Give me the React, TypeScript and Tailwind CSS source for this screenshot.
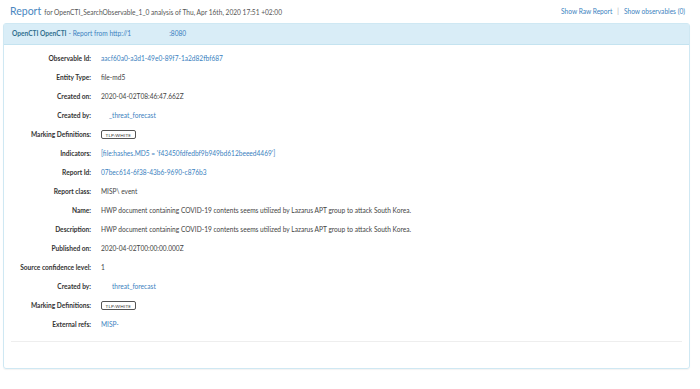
import React from "react";

type Row = {
  label: string;
  value: React.ReactNode;
};

const link = "text-[#3b7fc0]";

const Tlp = () => (
  <span className="inline-flex h-[9px] items-center rounded-[2px] border border-[#555] px-[3.5px] text-[4.6px] leading-none tracking-[0.2px] text-[#333]">
    TLP:WHITE
  </span>
);

const rows: Row[] = [
  { label: "Observable Id:", value: <span className={link}>aacf60a0-a3d1-49e0-89f7-1a2d82fbf687</span> },
  { label: "Entity Type:", value: "file-md5" },
  { label: "Created on:", value: "2020-04-02T08:46:47.662Z" },
  { label: "Created by:", value: <span className={`${link} pl-[8px]`}>_threat_forecast</span> },
  { label: "Marking Definitions:", value: <Tlp /> },
  {
    label: "Indicators:",
    value: <span className={link}>[file:hashes.MD5 = 'f43450fdfedbf9b949bd612beeed4469']</span>,
  },
  { label: "Report Id:", value: <span className={link}>07bec614-6f38-43b6-9690-c876b3</span> },
  { label: "Report class:", value: "MISP\\ event" },
  {
    label: "Name:",
    value: "HWP document containing COVID-19 contents seems utilized by Lazarus APT group to attack South Korea.",
  },
  {
    label: "Description:",
    value: "HWP document containing COVID-19 contents seems utilized by Lazarus APT group to attack South Korea.",
  },
  { label: "Published on:", value: "2020-04-02T00:00:00.000Z" },
  { label: "Source confidence level:", value: "1" },
  { label: "Created by:", value: <span className={`${link} pl-[11px]`}>threat_forecast</span> },
  { label: "Marking Definitions:", value: <Tlp /> },
  { label: "External refs:", value: <span className={link}>MISP-</span> },
];

export default function App() {
  return (
    <div className="h-[389px] w-[700px] bg-white font-['Lato',sans-serif] text-[#444]">
      {/* top line */}
      <div className="flex h-[23px] items-center justify-between pl-[10px] pr-[15px]">
        <div className="flex items-baseline gap-[3px]">
          <span className="text-[10.5px] text-[#4a87bf]">Report</span>
          <span className="text-[6.6px] text-[#555]">
            for OpenCTI_SearchObservable_1_0 analysis of Thu, Apr 16th, 2020 17:51 +02:00
          </span>
        </div>
        <div className="flex items-center gap-[5px] text-[6.6px]">
          <span className={link}>Show Raw Report</span>
          <span className="text-[#aaa]">|</span>
          <span className={link}>Show observables (0)</span>
        </div>
      </div>

      {/* panel */}
      <div className="ml-[3px] w-[687px] rounded-[3px] border border-[#cfe8f3] shadow-[0_1px_1px_rgba(0,0,0,0.05)]">
        <div className="flex h-[21px] items-center border-b border-[#c4e3f0] bg-[#d9edf7] pl-[8px] text-[6.6px]">
          <span className="font-bold text-[#31708f]">OpenCTI OpenCTI</span>
          <span className="ml-[2px] text-[#3b7fc0]">- Report from http://1</span>
          <span className="w-[38px]" />
          <span className="text-[#3b7fc0]">:8080</span>
        </div>
        <div className="px-[7px] pt-[4px] pb-[26px]">
          <div className="flex flex-col">
            {rows.map((r, i) => (
              <div key={i} className="flex h-[19px] items-center text-[6.6px]">
                <div className="w-[90px] pr-[10px] text-right font-bold text-[#333]">{r.label}</div>
                <div className="text-[#444]">{r.value}</div>
              </div>
            ))}
          </div>
          <div className="mt-[7px] border-t border-[#eee]" />
        </div>
      </div>
    </div>
  );
}
